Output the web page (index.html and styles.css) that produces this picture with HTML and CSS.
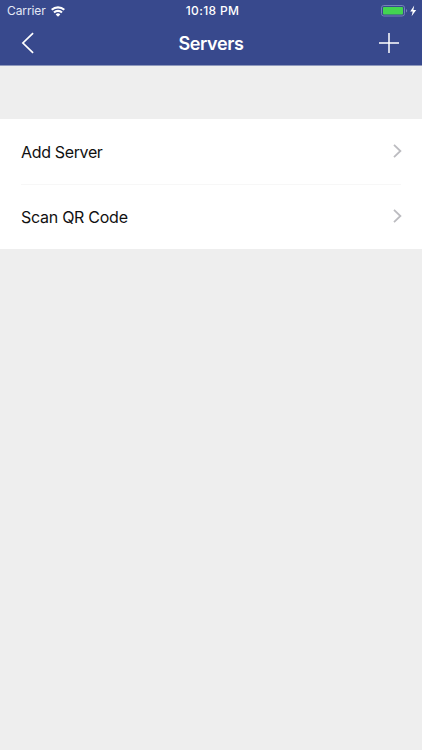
FILE: index.html
```html
<!DOCTYPE html>
<html lang="en">
<head>
<meta charset="utf-8">
<title>Servers</title>
<link rel="stylesheet" href="styles.css">
</head>
<body>
<header class="header">
  <div class="status">
    <div class="status-left">
      <span class="carrier">Carrier</span>
      <svg class="wifi" width="14" height="11" viewBox="0 0 14 11" fill="none" stroke="#fff" stroke-width="2.1">
        <path d="M.7 3.7C4.3.6 9.7.6 13.3 3.7M3 6.4c2.2-2.1 5.8-2.1 8 0"/>
        <path d="M7 10.7 4.7 8.4a3.3 3.3 0 0 1 4.6 0z" fill="#fff" stroke="none"/>
      </svg>
    </div>
    <span class="time">10:18 PM</span>
    <div class="status-right">
      <svg width="36" height="12" viewBox="0 0 36 12">
        <rect x=".5" y=".5" width="23" height="10.5" rx="2.3" fill="none" stroke="#7482b8"/>
        <rect x="2" y="2" width="20" height="7.5" rx=".8" fill="#43d551"/>
        <path d="M25 4.1c1.6.5 1.6 2.8 0 3.3z" fill="#7482b8"/>
        <path d="M33.2.6 29.2 6.6h2.5l-1.1 4.6 4.6-6.2h-2.8z" fill="#fff"/>
      </svg>
    </div>
  </div>
  <nav class="nav">
    <svg class="back" width="14" height="22" viewBox="0 0 14 22" fill="none" stroke="#fff" stroke-width="1.7"><path d="M12.1 1.2 1.9 11l10.2 9.8"/></svg>
    <h1 class="title">Servers</h1>
    <svg class="add" width="20" height="20" viewBox="0 0 20 20" fill="none" stroke="#fff" stroke-width="1.5"><path d="M10 0v20M0 10h20"/></svg>
  </nav>
</header>
<main class="list">
  <div class="row">
    <span class="label label-add">Add Server</span>
    <svg class="chevron" width="9" height="14" viewBox="0 0 9 14" fill="none" stroke="#bcbcc0" stroke-width="1.8"><path d="m1 .8 6.4 6.2L1 13.2"/></svg>
  </div>
  <div class="row">
    <span class="label label-scan">Scan QR Code</span>
    <svg class="chevron" width="9" height="14" viewBox="0 0 9 14" fill="none" stroke="#bcbcc0" stroke-width="1.8"><path d="m1 .8 6.4 6.2L1 13.2"/></svg>
  </div>
</main>
</body>
</html>
```
FILE: styles.css
```css
* { box-sizing: border-box; }
body {
  margin: 0;
  min-height: 750px;
  background: #eeeeee;
  font-family: Inter, "Liberation Sans", sans-serif;
}
svg { display: block; flex: none; }
.header {
  height: 66px;
  background: #38498d;
  border-bottom: 1px solid #8f99bc;
  color: #fff;
}
.status {
  display: grid;
  grid-template-columns: 1fr auto 1fr;
  align-items: center;
  height: 22px;
  padding: 0 5px 0 7px;
  font-size: 12px;
  line-height: 22px;
}
.status-left { display: flex; align-items: center; gap: 6px; }
.carrier { width: 38px; color: #e4e8f5; letter-spacing: -0.1px; white-space: nowrap; }
.time { margin-left: 1px; font-weight: 500; letter-spacing: 0.35px; white-space: nowrap; }
.status-right { display: flex; justify-content: flex-end; }
.nav {
  display: grid;
  grid-template-columns: 1fr auto 1fr;
  align-items: center;
  height: 42px;
  padding: 0 23px 0 21px;
}
.title {
  margin: 2px 0 0 2px;
  font-size: 18px;
  font-weight: 600;
  letter-spacing: -0.4px;
  line-height: 24px;
}
.add { justify-self: end; }
.list {
  margin-top: 53px;
  padding-left: 21px;
  background: #fff;
}
.row {
  display: flex;
  align-items: center;
  justify-content: space-between;
  height: 65px;
  padding-right: 20px;
}
.row + .row {
  background: linear-gradient(#f7f7f7, #f7f7f7) 0 0 / calc(100% - 21px) 1px no-repeat;
}
.label {
  color: #111;
  font-size: 16px;
  line-height: 22px;
}
.label-add { letter-spacing: -0.35px; }
.label-scan { letter-spacing: -0.27px; }
.chevron { margin-bottom: 1px; }
```
